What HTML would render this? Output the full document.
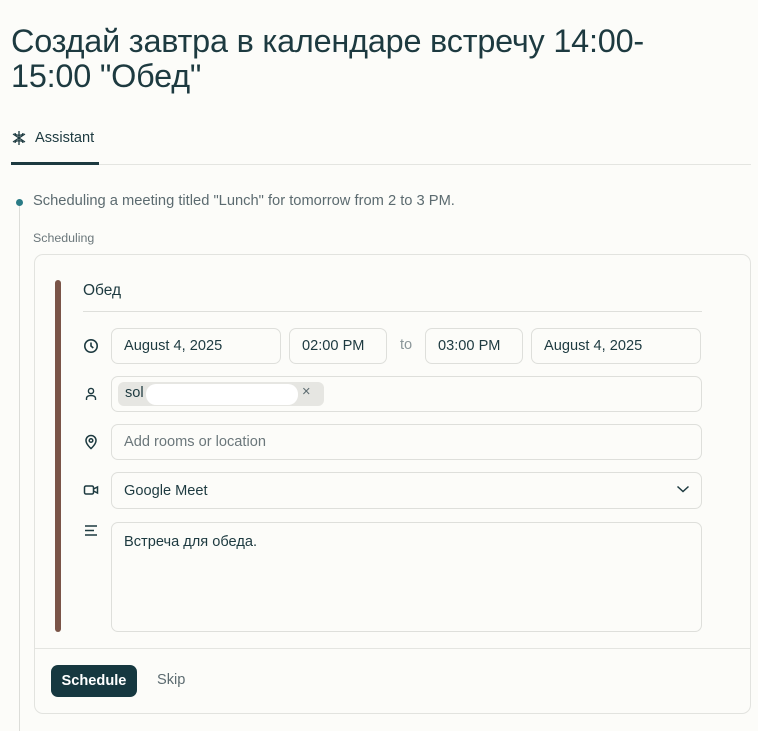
<!DOCTYPE html>
<html><head><meta charset="utf-8"><style>
*{box-sizing:border-box;margin:0;padding:0}
body{width:758px;height:731px;background:#fcfcf9;font-family:"Liberation Sans",sans-serif;color:#1d3a40;position:relative;overflow:hidden}
.a{position:absolute}
.h1{left:11px;top:24px;font-size:32.4px;line-height:35px;color:#1d3a40;letter-spacing:-0.2px}
.in{position:absolute;border:1px solid #dedfdb;border-radius:7px;background:#fcfcf9;font-size:14.6px;color:#1d3a40;padding-left:12px;display:flex;align-items:center}
.ic{position:absolute;left:83px;width:16px;height:16px}
</style></head><body>
<div class="a h1">Создай завтра в календаре встречу 14:00-<br>15:00 "Обед"</div>
<svg class="a" style="left:11px;top:130px" width="16" height="16" viewBox="0 0 16 16" fill="none" stroke="#1d3a40" stroke-width="1.3"><path d="M8 1v14M2 4l12 8M14 4L2 12M4 3c0 3 8 3 8 0M4 13c0-3 8-3 8 0"/></svg>
<div class="a" style="left:35px;top:130px;font-size:14.6px">Assistant</div>
<div class="a" style="left:11px;top:164px;width:740px;height:1px;background:#e4e5e1"></div>
<div class="a" style="left:11px;top:162px;width:88px;height:3px;background:#1d3a40"></div>
<div class="a" style="left:19px;top:206px;width:1px;height:525px;background:#dcddd9"></div>
<div class="a" style="left:16px;top:199px;width:7px;height:7px;border-radius:50%;background:#2a7b86"></div>
<div class="a" style="left:33px;top:193px;font-size:14.7px;color:#5c6b70">Scheduling a meeting titled "Lunch" for tomorrow from 2 to 3 PM.</div>
<div class="a" style="left:33px;top:231px;font-size:12.4px;color:#6b777b">Scheduling</div>
<div class="a" style="left:34px;top:254px;width:717px;height:460px;border:1px solid #e2e3df;border-radius:9px;background:#fcfcf9"></div>
<div class="a" style="left:35px;top:648px;width:715px;height:1px;background:#e4e5e1"></div>
<div class="a" style="left:55px;top:280px;width:6px;height:352px;border-radius:3px;background:#7a5448"></div>
<div class="a" style="left:83px;top:282px;font-size:15.5px">Обед</div>
<div class="a" style="left:83px;top:311px;width:619px;height:1px;background:#dedfdb"></div>
<svg class="ic" style="top:338px" viewBox="0 0 16 16" fill="none" stroke="#1d3a40" stroke-width="1.6"><circle cx="8" cy="8" r="6.2"/><path d="M8 4.5V8l2.3 2"/></svg>
<div class="in" style="left:111px;top:328px;width:170px;height:36px">August 4, 2025</div>
<div class="in" style="left:289px;top:328px;width:98px;height:36px">02:00 PM</div>
<div class="a" style="left:400px;top:337px;font-size:14.6px;color:#8a9699">to</div>
<div class="in" style="left:425px;top:328px;width:98px;height:36px">03:00 PM</div>
<div class="in" style="left:531px;top:328px;width:170px;height:36px">August 4, 2025</div>
<svg class="ic" style="top:386px" viewBox="0 0 16 16" fill="none" stroke="#1d3a40" stroke-width="1.4"><circle cx="8" cy="5" r="2.6"/><path d="M3.5 14v-1.5c0-2 2-3 4.5-3s4.5 1 4.5 3V14"/></svg>
<div class="in" style="left:111px;top:376px;width:591px;height:36px;padding-left:6px"><div style="background:#e6e6e2;border-radius:6px;height:24px;width:206px;position:relative;font-size:14.6px;padding:3px 0 0 7px">sol<div class="a" style="left:28px;top:2px;width:152px;height:21px;background:#fff;border-radius:10px"></div><span class="a" style="left:184px;top:2px;color:#5c6b70">×</span></div></div>
<svg class="ic" style="top:434px" viewBox="0 0 16 16" fill="none" stroke="#1d3a40" stroke-width="1.5"><path d="M8 14.5s-5-4.2-5-8a5 5 0 0110 0c0 3.8-5 8-5 8z"/><circle cx="8" cy="6.5" r="1.8"/></svg>
<div class="in" style="left:111px;top:424px;width:591px;height:36px;color:#6b777b">Add rooms or location</div>
<svg class="ic" style="top:482px" viewBox="0 0 16 16" fill="none" stroke="#1d3a40" stroke-width="1.5"><rect x="1.5" y="4" width="9" height="8" rx="1.5"/><path d="M10.5 7l4-2v6l-4-2"/></svg>
<div class="in" style="left:111px;top:472px;width:591px;height:37px">Google Meet</div>
<svg class="a" style="left:676px;top:484px" width="14" height="10" viewBox="0 0 14 10" fill="none" stroke="#1d3a40" stroke-width="1.5"><path d="M1.5 2.5L7 7.5l5.5-5"/></svg>
<svg class="ic" style="top:523px" viewBox="0 0 16 16" fill="none" stroke="#1d3a40" stroke-width="1.5"><path d="M2 3h12M2 7.5h9M2 12h12"/></svg>
<div class="in" style="left:111px;top:522px;width:591px;height:110px;align-items:flex-start;padding-top:11px">Встреча для обеда.</div>
<div class="a" style="left:51px;top:665px;width:86px;height:32px;border-radius:7px;background:#163840;color:#fff;font-size:14.6px;font-weight:bold;display:flex;align-items:center;justify-content:center">Schedule</div>
<div class="a" style="left:157px;top:672px;font-size:14.6px;color:#5c6b70">Skip</div>
</body></html>
